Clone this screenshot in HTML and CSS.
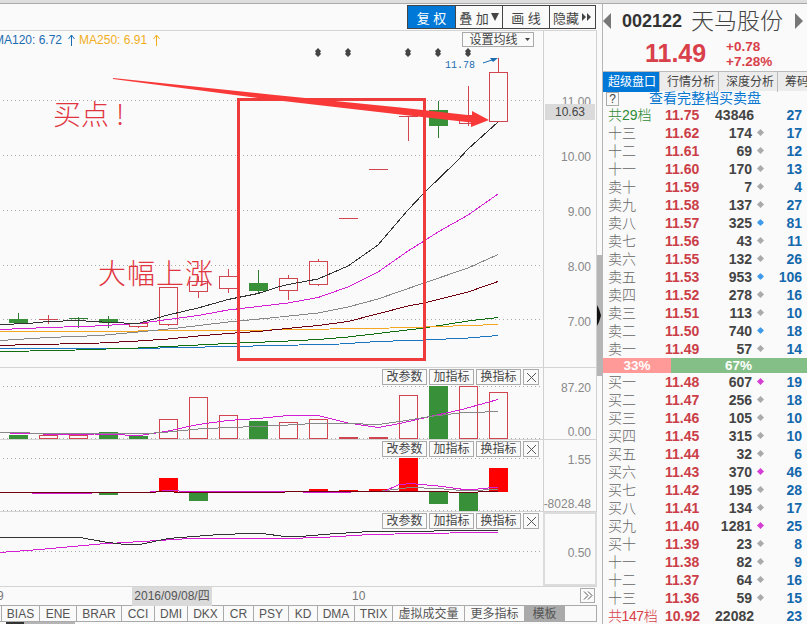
FILE: index.html
```html
<!DOCTYPE html>
<html lang="zh-CN">
<head>
  <meta charset="UTF-8">
  <title>002122 天马股份</title>
  <link rel="stylesheet" href="styles.css">
</head>
<body>
  <div class="top-strip"></div>
  <div class="layout">
    <div class="chart-side">
      <div class="toolbar">
        <button class="tool active">复 权</button>
        <button class="tool">叠 加<svg width="8" height="10" viewBox="0 0 8 10"><path d="M0 1H8L4 9Z"/></svg></button>
        <button class="tool">画 线</button>
        <button class="tool">隐藏<svg width="11" height="8" viewBox="0 0 11 8"><path d="M1 0L5 4L1 8ZM6 0L10 4L6 8Z"/></svg></button>
      </div>

      <!-- K line -->
      <div class="pane pane-main">
        <svg class="plot" width="543" height="336" viewBox="0 31 543 336">
          <g class="grid">
            <path d="M3 100.5H543M3 155.5H543M3 210.5H543M3 265.5H543M3 319.5H543"/>
          </g>
          <g class="marks">
            <path d="M318 48l3 3-1 1.500 1 1.500-3 3-3-3 1-1.500-1-1.500z"/>
            <path d="M348 48l3 3-1 1.500 1 1.500-3 3-3-3 1-1.500-1-1.500z"/>
            <path d="M408 48l3 3-1 1.500 1 1.500-3 3-3-3 1-1.500-1-1.500z"/>
            <path d="M438 48l3 3-1 1.500 1 1.500-3 3-3-3 1-1.500-1-1.500z"/>
            <path d="M468 48l3 3-1 1.500 1 1.500-3 3-3-3 1-1.500-1-1.500z"/>
          </g>
          <g class="down">
            <path d="M18.500 313V323M78.500 317V328M69 318.500H88M108.500 316V328M258.500 270V293M438.500 101V138"/>
            <rect x="9" y="319" width="19" height="4"/>
            <rect x="99" y="319" width="19" height="4"/>
            <rect x="249" y="283" width="19" height="8"/>
            <rect x="429" y="110" width="19" height="16"/>
          </g>
          <g class="up">
            <path d="M48.500 315V324M39 319.500H58M138.500 327V328M168.500 324V326M198.500 276V281M198.500 292V298M228.500 269V276M228.500 289V293M288.500 275V278M288.500 291V300M318.500 259V261M318.500 285V286M339 218.500H358M369 169.500H388M399 116.500H418M408.500 116V141M468.500 86V126M498.500 58V72"/>
            <rect x="129.500" y="323.500" width="18" height="3"/>
            <rect x="159.500" y="287.500" width="18" height="37"/>
            <rect x="189.500" y="281.500" width="18" height="10"/>
            <rect x="219.500" y="276.500" width="18" height="12"/>
            <rect x="279.500" y="278.500" width="18" height="12"/>
            <rect x="309.500" y="261.500" width="18" height="23"/>
            <rect x="459.500" y="115.500" width="18" height="8"/>
            <rect x="489.500" y="72.500" width="18" height="49"/>
          </g>
          <g class="lines">
            <polyline class="ma-blue" points="0,348.5 138,348.5 228,346.5 278,345.5 340,344 378,341.5 424,340 468,338 498,335.5"/>
            <polyline class="ma-green" points="0,351.5 60,350.5 138,348 168,346.5 228,343.5 278,341.5 318,339.5 348,337 378,333.5 424,328 468,321 498,317.5"/>
            <polyline class="ma-orange" points="0,331.5 138,331 228,330.5 270,330 330,329 390,328 424,327 468,325.5 498,324.5"/>
            <polyline class="ma-maroon" points="0,345.5 30,344.5 90,343.5 138,341 168,339 198,336 228,333.500 258,331.5 282,329 318,325.5 348,321.5 408,306 424,303 468,292 498,281.5"/>
            <polyline class="ma-gray" points="0,340.500 48,337.5 100,335.5 138,332 178,328 228,322 270,318 318,313 348,307 378,299 424,283 468,268 498,254.5"/>
            <polyline class="ma-magenta" points="0,329.500 48,327.5 95,326 138,323.500 168,319.5 198,315.5 228,310 258,306.5 288,303 318,297.5 348,287 378,272 408,251 424,241 438,232 468,215 498,194"/>
            <polyline class="ma-black" points="0,324.500 28,323.5 48,321.5 78,320.500 110,322.5 138,323.500 168,315 198,308 228,299.500 258,293.5 278,287 288,284.5 318,279 348,266 378,245 408,210 424,193 458,160 468,149 498,122"/>
          </g>
          <text class="peak" x="445" y="68">11.78</text>
          <path class="peak-line" d="M483 63L495 59"/>
          <path class="peak-head" d="M498 58l-8 0 3 4z"/>
          <rect class="frame" x="238.500" y="99.500" width="186" height="260"/>
          <path class="arrow" d="M113 78L270 94.500L400 107.500L472 115.500V111L489 120L471 127V122.500L400 114.500L270 99.500L113 79Z"/>
          <text class="note" x="53" y="125">买点</text>
          <text class="note" x="116" y="125">!</text>
          <text class="note note-rise" x="98" y="284">大幅上涨</text>
        </svg>
        <div class="axis axis-main">
          <span>11.00</span><span>10.00</span><span>9.00</span><span>8.00</span><span>7.00</span>
        </div>
        <div class="ma-legend">
          <span class="legend-blue">MA120: 6.72<svg width="7" height="12" viewBox="0 0 7 12"><path d="M3.500 12V1M.5 5L3.500 1L6.500 5"/></svg></span>
          <span class="legend-orange">MA250: 6.91<svg width="7" height="12" viewBox="0 0 7 12"><path d="M3.500 12V1M.5 5L3.500 1L6.500 5"/></svg></span>
        </div>
        <button class="ma-setting">设置均线<svg width="5" height="3" viewBox="0 0 5 3"><path d="M0 0H5L2.500 3Z"/></svg></button>
        <div class="price-tag">10.63</div>
      </div>

      <!-- volume -->
      <div class="pane">
        <svg class="plot" width="543" height="71" viewBox="0 368 543 71">
          <g class="grid"><path d="M3 386.500H543M3 438.500H543"/></g>
          <g class="down">
            <rect x="9" y="435" width="19" height="4"/>
            <rect x="99" y="432" width="19" height="7"/>
            <rect x="129" y="436" width="19" height="3"/>
            <rect x="249" y="421" width="19" height="18"/>
            <rect x="429" y="386" width="19" height="53"/>
          </g>
          <g class="up">
            <rect x="39.500" y="435.500" width="18" height="3"/>
            <rect x="69.500" y="435.500" width="18" height="3"/>
            <rect x="159.500" y="419.500" width="18" height="19"/>
            <rect x="189.500" y="397.500" width="18" height="41"/>
            <rect x="219.500" y="415.500" width="18" height="23"/>
            <rect x="279.500" y="422.500" width="18" height="16"/>
            <rect x="309.500" y="419.500" width="18" height="19"/>
            <rect x="339.500" y="437.500" width="18" height="1"/>
            <rect x="369.500" y="437.500" width="18" height="1"/>
            <rect x="399.500" y="395.500" width="18" height="43"/>
            <rect x="459.500" y="386.500" width="18" height="52"/>
            <rect x="489.500" y="392.500" width="18" height="46"/>
          </g>
          <g class="lines">
            <polyline class="ma-magenta" points="0,432.500 10,433 60,434.5 95,434 140,435.500 168,431 198,424.500 228,420.5 258,418.5 288,415.500 318,415.5 348,423 378,427.500 400,423.5 430,416.500 460,410 498,399.500"/>
            <polyline class="ma-gray" points="0,432.500 60,433.500 140,434 168,432 198,429 228,427.5 258,426.5 288,425 314,423.500 348,423.500 378,424.5 400,421.5 430,416.500 460,413 498,411.5"/>
          </g>
        </svg>
        <div class="axis"><span>87.20</span><span>0.00</span></div>
        <div class="pane-tools">
          <button>改参数</button><button>加指标</button><button>换指标</button>
          <button class="close"><svg width="11" height="11" viewBox="0 0 11 11"><path d="M1 1L10 10M10 1L1 10"/></svg></button>
        </div>
      </div>

      <div class="pane">
        <svg class="plot" width="543" height="71" viewBox="0 440 543 71">
          <g class="grid"><path d="M3 458.500H543M3 510.500H543"/></g>
          <g class="inflow">
            <rect x="159" y="478" width="19" height="14"/>
            <rect x="309" y="489" width="19" height="3"/>
            <rect x="339" y="490" width="19" height="2"/>
            <rect x="369" y="489" width="19" height="3"/>
            <rect x="399" y="458" width="19" height="34"/>
            <rect x="489" y="468" width="19" height="24"/>
          </g>
          <g class="down">
            <rect x="99" y="492" width="19" height="3"/>
            <rect x="189" y="492" width="19" height="9"/>
            <rect x="429" y="492" width="19" height="12"/>
            <rect x="459" y="492" width="19" height="19"/>
          </g>
          <g class="lines">
            <polyline class="ma-gray" points="375,492 390,490 410,487.5 438,488.500 468,491 498,489"/>
            <polyline class="ma-magenta" points="0,492.500 64,493.500 150,492 168,490.500 190,491.5 270,491.500 296,491.5 318,493 385,491 398,485 410,483.500 438,486 468,490 498,487"/>
            <polyline class="ma-maroon" points="0,492.500 153,492.500 160,491.5 188,492.500 385,491.500 430,491.500 468,492.500 498,491"/>
          </g>
        </svg>
        <div class="axis"><span>1.55</span><span>-8028.48</span></div>
        <div class="pane-tools">
          <button>改参数</button><button>加指标</button><button>换指标</button>
          <button class="close"><svg width="11" height="11" viewBox="0 0 11 11"><path d="M1 1L10 10M10 1L1 10"/></svg></button>
        </div>
      </div>

      <div class="pane pane-last">
        <svg class="plot" width="543" height="74" viewBox="0 512 543 74">
          <g class="grid"><path d="M3 551.500H543"/></g>
          <g class="lines">
            <polyline class="ma-magenta" points="0,552.500 40,549.500 100,544 150,541 190,538.500 290,538.500 330,537 370,534.500 420,533.5 450,533 498,532.5"/>
            <polyline class="ma-black" points="0,537 80,537.500 105,542 125,544.500 140,544.500 168,538.500 220,534.5 250,533.500 262,533.5 285,536.500 300,536.500 330,534 370,531.500 498,530.500"/>
          </g>
        </svg>
        <div class="axis"><span>0.50</span></div>
        <div class="pane-tools">
          <button>改参数</button><button>加指标</button><button>换指标</button>
          <button class="close"><svg width="11" height="11" viewBox="0 0 11 11"><path d="M1 1L10 10M10 1L1 10"/></svg></button>
        </div>
      </div>

      <div class="date-axis">
        <span class="month">9</span>
        <span class="date">2016/09/08/四</span>
        <span class="month">10</span>
        <button class="more"><svg width="10" height="9" viewBox="0 0 10 9"><path d="M1 .5L5 4.500L1 8.500M5 .5L9 4.500L5 8.500"/></svg></button>
      </div>

      <div class="indicator-tabs">
        <span></span><span>BIAS</span><span>ENE</span><span>BRAR</span><span>CCI</span><span>DMI</span><span>DKX</span><span>CR</span><span>PSY</span><span>KD</span><span>DMA</span><span>TRIX</span><span>虚拟成交量</span><span>更多指标</span><span class="current">模板</span><span></span>
      </div>
      <div class="bottom-scroll"><div class="bottom-thumb"></div></div>
    </div>

    <div class="splitter">
      <div class="thumb"><svg width="5" height="21" viewBox="0 0 5 21"><path d="M0 0L2 4L4 10.500L2 17L0 21Z"/></svg></div>
    </div>

    <div class="quote">
      <div class="stock">
        <svg width="9" height="16" viewBox="0 0 9 16"><path d="M8 0V16L0 8Z"/></svg>
        <span class="code">002122</span>
        <span class="name">天马股份</span>
        <svg width="9" height="16" viewBox="0 0 9 16"><path d="M0 0V16L8 8Z"/></svg>
      </div>
      <div class="price">
        <span class="last">11.49</span>
        <div class="change"><span>+0.78</span><span>+7.28%</span></div>
      </div>
      <div class="quote-tabs">
        <span class="current">超级盘口</span><span>行情分析</span><span>深度分析</span><span>筹码</span>
      </div>
      <div class="book-link"><span class="help">?</span><span class="link">查看完整档买卖盘</span></div>

      <div class="book">
        <div class="row total sell"><span>共29档</span><b>11.75</b><b>43846</b><i></i><b>27</b></div>
        <div class="row"><span>十三</span><b>11.62</b><b>174</b><i></i><b>17</b></div>
        <div class="row"><span>十二</span><b>11.61</b><b>69</b><i></i><b>12</b></div>
        <div class="row"><span>十一</span><b>11.60</b><b>170</b><i></i><b>13</b></div>
        <div class="row"><span>卖十</span><b>11.59</b><b>7</b><i></i><b>4</b></div>
        <div class="row"><span>卖九</span><b>11.58</b><b>137</b><i></i><b>27</b></div>
        <div class="row"><span>卖八</span><b>11.57</b><b>325</b><i class="big-sell"></i><b>81</b></div>
        <div class="row"><span>卖七</span><b>11.56</b><b>43</b><i></i><b>11</b></div>
        <div class="row"><span>卖六</span><b>11.55</b><b>132</b><i></i><b>26</b></div>
        <div class="row"><span>卖五</span><b>11.53</b><b>953</b><i class="big-sell"></i><b>106</b></div>
        <div class="row"><span>卖四</span><b>11.52</b><b>278</b><i></i><b>16</b></div>
        <div class="row"><span>卖三</span><b>11.51</b><b>113</b><i></i><b>10</b></div>
        <div class="row"><span>卖二</span><b>11.50</b><b>740</b><i class="big-sell"></i><b>18</b></div>
        <div class="row"><span>卖一</span><b>11.49</b><b>57</b><i></i><b>14</b></div>
      </div>
      <div class="ratio"><span class="ratio-buy">33%</span><span class="ratio-sell">67%</span></div>
      <div class="book">
        <div class="row"><span>买一</span><b>11.48</b><b>607</b><i class="big-buy"></i><b>19</b></div>
        <div class="row"><span>买二</span><b>11.47</b><b>256</b><i></i><b>18</b></div>
        <div class="row"><span>买三</span><b>11.46</b><b>105</b><i></i><b>10</b></div>
        <div class="row"><span>买四</span><b>11.45</b><b>315</b><i></i><b>10</b></div>
        <div class="row"><span>买五</span><b>11.44</b><b>32</b><i></i><b>6</b></div>
        <div class="row"><span>买六</span><b>11.43</b><b>370</b><i class="big-buy"></i><b>46</b></div>
        <div class="row"><span>买七</span><b>11.42</b><b>195</b><i></i><b>28</b></div>
        <div class="row"><span>买八</span><b>11.41</b><b>134</b><i></i><b>17</b></div>
        <div class="row"><span>买九</span><b>11.40</b><b>1281</b><i class="big-buy"></i><b>25</b></div>
        <div class="row"><span>买十</span><b>11.39</b><b>23</b><i></i><b>8</b></div>
        <div class="row"><span>十一</span><b>11.38</b><b>82</b><i></i><b>9</b></div>
        <div class="row"><span>十二</span><b>11.37</b><b>64</b><i></i><b>16</b></div>
        <div class="row"><span>十三</span><b>11.36</b><b>59</b><i></i><b>15</b></div>
        <div class="row total buy"><span>共147档</span><b>10.92</b><b>22082</b><i></i><b>23</b></div>
      </div>
    </div>
  </div>
</body>
</html>
```
FILE: styles.css
```css
* {
  box-sizing: border-box;
}
body {
  margin: 0;
  width: 807px;
  height: 624px;
  overflow: hidden;
  background: #fafafa;
  color: #444;
  font-family: "Liberation Sans", "Noto Sans CJK SC", sans-serif;
  font-size: 12px;
}
button {
  font: inherit;
  color: inherit;
  background: #fafafa;
  padding: 0;
  white-space: nowrap;
}
svg {
  display: block;
}
.top-strip {
  height: 4px;
  background: #dedede;
  border-bottom: 1px solid #aaa;
}
.layout {
  display: flex;
  height: 620px;
}

/* left side */
.chart-side {
  width: 597px;
  flex: none;
}
.toolbar {
  display: flex;
  justify-content: flex-end;
  height: 27px;
  padding: 1px 1px 1px 0;
  border-bottom: 1px solid #d4d4d4;
}
.tool {
  display: flex;
  align-items: center;
  justify-content: center;
  gap: 2px;
  width: 48px;
  height: 24px;
  margin-left: -1px;
  border: 1px solid #444;
  font-size: 13px;
}
.tool:last-child {
  width: 47px;
}
.tool svg {
  fill: #444;
}
.tool.active {
  width: 49px;
  background: #0078d7;
  color: #fff;
}
.pane {
  position: relative;
  display: flex;
  width: 597px;
  height: 72px;
  border-bottom: 1px solid #d4d4d4;
}
.pane-main {
  height: 337px;
}
.pane-last {
  height: 75px;
}
.axis {
  display: flex;
  flex-direction: column;
  justify-content: space-between;
  width: 54px;
  padding: 13px 5px 0 0;
  border-left: 1px solid #d0d0d0;
  border-right: 1px solid #d0d0d0;
  text-align: right;
  color: #888;
  line-height: 14px;
}
.axis span {
  align-self: flex-end;
}
.axis-main {
  justify-content: flex-start;
  gap: 41px;
  padding-top: 64px;
}
.pane-last .axis {
  justify-content: center;
  padding-top: 8px;
  border: 2px solid #dcdcdc;
  padding-right: 4px;
}

.grid path {
  stroke: #aaa;
  stroke-dasharray: 1 3;
}
.marks path {
  fill: #444;
}
.down path {
  stroke: #2f7d32;
}
.down rect {
  fill: #389038;
}
.up path,
.up rect {
  fill: none;
  stroke: #cf4650;
}
.inflow rect {
  fill: #f00;
}
.lines polyline {
  fill: none;
  shape-rendering: crispEdges;
}
.lines .ma-black { stroke: #333; }
.lines .ma-magenta { stroke: #d51fd5; }
.lines .ma-gray { stroke: #888; }
.lines .ma-maroon { stroke: #700010; }
.lines .ma-green { stroke: #107010; }
.lines .ma-blue { stroke: #1a74c0; }
.lines .ma-orange { stroke: #f5a623; }
.peak {
  fill: #1a6cb0;
  font-family: "Liberation Mono", monospace;
  font-size: 10px;
}
.peak-line {
  stroke: #1a6cb0;
}
.peak-head {
  fill: #1a6cb0;
}
.frame {
  fill: none;
  stroke: #ee3c3c;
  stroke-width: 3;
}
.arrow {
  fill: #f93838;
}
.note {
  fill: #e0343f;
  font-family: "Noto Sans CJK SC", sans-serif;
  font-weight: 300;
  font-size: 28px;
}
.note-rise {
  letter-spacing: 1px;
}
.ma-legend {
  position: absolute;
  top: 2px;
  left: -6px;
  display: flex;
  gap: 4px;
  line-height: 14px;
}
.ma-legend span {
  display: flex;
  gap: 6px;
}
.ma-legend svg {
  margin-top: 1px;
  fill: none;
  stroke: currentColor;
}
.legend-blue {
  color: #1a6cb0;
}
.legend-orange {
  color: #f0ae1c;
}
.ma-setting {
  position: absolute;
  top: 1px;
  left: 462px;
  display: flex;
  align-items: center;
  justify-content: center;
  gap: 7px;
  width: 72px;
  height: 15px;
  padding-left: 3px;
  border: 1px solid #aaa;
  line-height: 12px;
}
.ma-setting svg {
  fill: #444;
}
.price-tag {
  position: absolute;
  top: 73px;
  left: 545px;
  width: 50px;
  height: 16px;
  padding-right: 10px;
  background: #dadada;
  line-height: 17px;
  text-align: right;
}
.pane-tools {
  position: absolute;
  top: 1px;
  left: 382px;
  display: flex;
  gap: 2px;
}
.pane-tools button {
  width: 45px;
  height: 16px;
  border: 1px solid #aaa;
  line-height: 14px;
}
.pane-tools .close {
  display: flex;
  align-items: center;
  justify-content: center;
  width: 16px;
}
.close svg {
  stroke: #555;
}
.date-axis {
  display: grid;
  grid-template-columns: 132px 80px 140px 228px 16px;
  height: 18px;
  line-height: 19px;
  color: #777;
}
.date-axis .month:first-child {
  margin-left: -3px;
}
.date {
  grid-column: 2;
  background: #dadada;
  text-align: center;
  color: #555;
  white-space: nowrap;
}
.date + .month {
  grid-column: 4;
}
.more {
  display: flex;
  align-items: center;
  justify-content: center;
  width: 15px;
  height: 15px;
  margin-top: 1px;
  border: 1px solid #aaa;
}
.more svg {
  fill: none;
  stroke: #555;
}
.indicator-tabs {
  display: grid;
  grid-template-columns: 2px 38px 37px 45px 33px 33px 36px 30px 35px 29px 37px 38px 72px 60px 40px 32px;
  height: 17px;
  border: solid #aaa;
  border-width: 1px 0;
  line-height: 16px;
  text-align: center;
  color: #555;
}
.indicator-tabs span {
  border-right: 1px solid #aaa;
  white-space: nowrap;
}
.indicator-tabs .current {
  background: #aaa;
}
.bottom-scroll {
  height: 2px;
}
.bottom-thumb {
  width: 69px;
  height: 2px;
  margin-left: 6px;
  background: #b5b5b5;
  border-left: 18px solid #333;
}

.splitter {
  width: 6px;
  flex: none;
  padding-top: 251px;
  border-right: 1px solid #b5b5b5;
}
.thumb {
  height: 121px;
  padding-top: 50px;
  background: #b5b5b5;
}
.thumb svg {
  fill: #111;
}

/* right side */
.quote {
  width: 204px;
  overflow: hidden;
}
.stock {
  display: flex;
  align-items: center;
  height: 34px;
}
.stock svg {
  flex: none;
  fill: #777;
}
.code {
  margin-left: 10px;
  width: 69px;
  font-size: 18px;
  font-weight: bold;
  color: #333;
}
.name {
  width: 104px;
  font-size: 23px;
  font-weight: 300;
  line-height: 32px;
  white-space: nowrap;
}
.price {
  display: flex;
  height: 32px;
  color: #d8404a;
  font-weight: bold;
}
.last {
  width: 81px;
  margin-left: 42px;
  font-size: 25px;
  line-height: 30px;
}
.change {
  display: flex;
  flex-direction: column;
  padding-top: 1px;
  font-size: 13.5px;
  line-height: 15px;
}
.quote-tabs {
  display: grid;
  grid-template-columns: 57px 59px 59px 59px;
  height: 20px;
  margin-top: 1px;
  background: #ececec;
  border-top: 1px solid #bbb;
  line-height: 20px;
}
.quote-tabs span {
  padding-left: 7px;
  border-right: 1px solid #bbb;
  white-space: nowrap;
}
.quote-tabs .current {
  padding-left: 5px;
  background: #0078d7;
  color: #fff;
}
.book-link {
  display: flex;
  height: 15px;
  padding-left: 3px;
}
.help {
  width: 13px;
  height: 14px;
  margin-top: 1px;
  border: 1px solid #aaa;
  line-height: 12px;
  text-align: center;
}
.link {
  margin-left: 30px;
  color: #0a78d0;
  font-size: 14px;
  line-height: 15px;
}
.row {
  display: grid;
  grid-template-columns: 57px 35px 52px 16px 34px;
  height: 18px;
  padding-left: 5px;
  font-size: 14px;
  line-height: 18px;
}
.row span {
  color: #666;
  font-weight: 300;
  white-space: nowrap;
}
.row b:nth-child(2) {
  color: #cb3e48;
}
.row b:nth-child(3) {
  text-align: right;
}
.row b:last-child {
  color: #1468ac;
  text-align: right;
}
.row i {
  width: 5px;
  height: 5px;
  margin: 6px auto 0;
  background: #aaa;
  transform: rotate(45deg);
}
.row .big-sell {
  background: #3f9bea;
  border-radius: 1px;
}
.row .big-buy {
  background: #d43ed4;
}
.total i {
  visibility: hidden;
}
.total b:nth-child(3) {
  margin-right: -2px;
}
.row.sell span {
  color: #2f8a36;
}
.row.buy span {
  color: #d8404a;
  letter-spacing: -0.4px;
}
.ratio {
  display: flex;
  height: 15px;
  color: #fff;
  font-size: 13.5px;
  font-weight: bold;
  line-height: 16px;
}
.ratio-buy {
  width: 68px;
  background: #ff9a98;
  text-align: center;
}
.ratio-sell {
  flex: 1;
  padding-left: 54px;
  background: #85bf88;
}
```
